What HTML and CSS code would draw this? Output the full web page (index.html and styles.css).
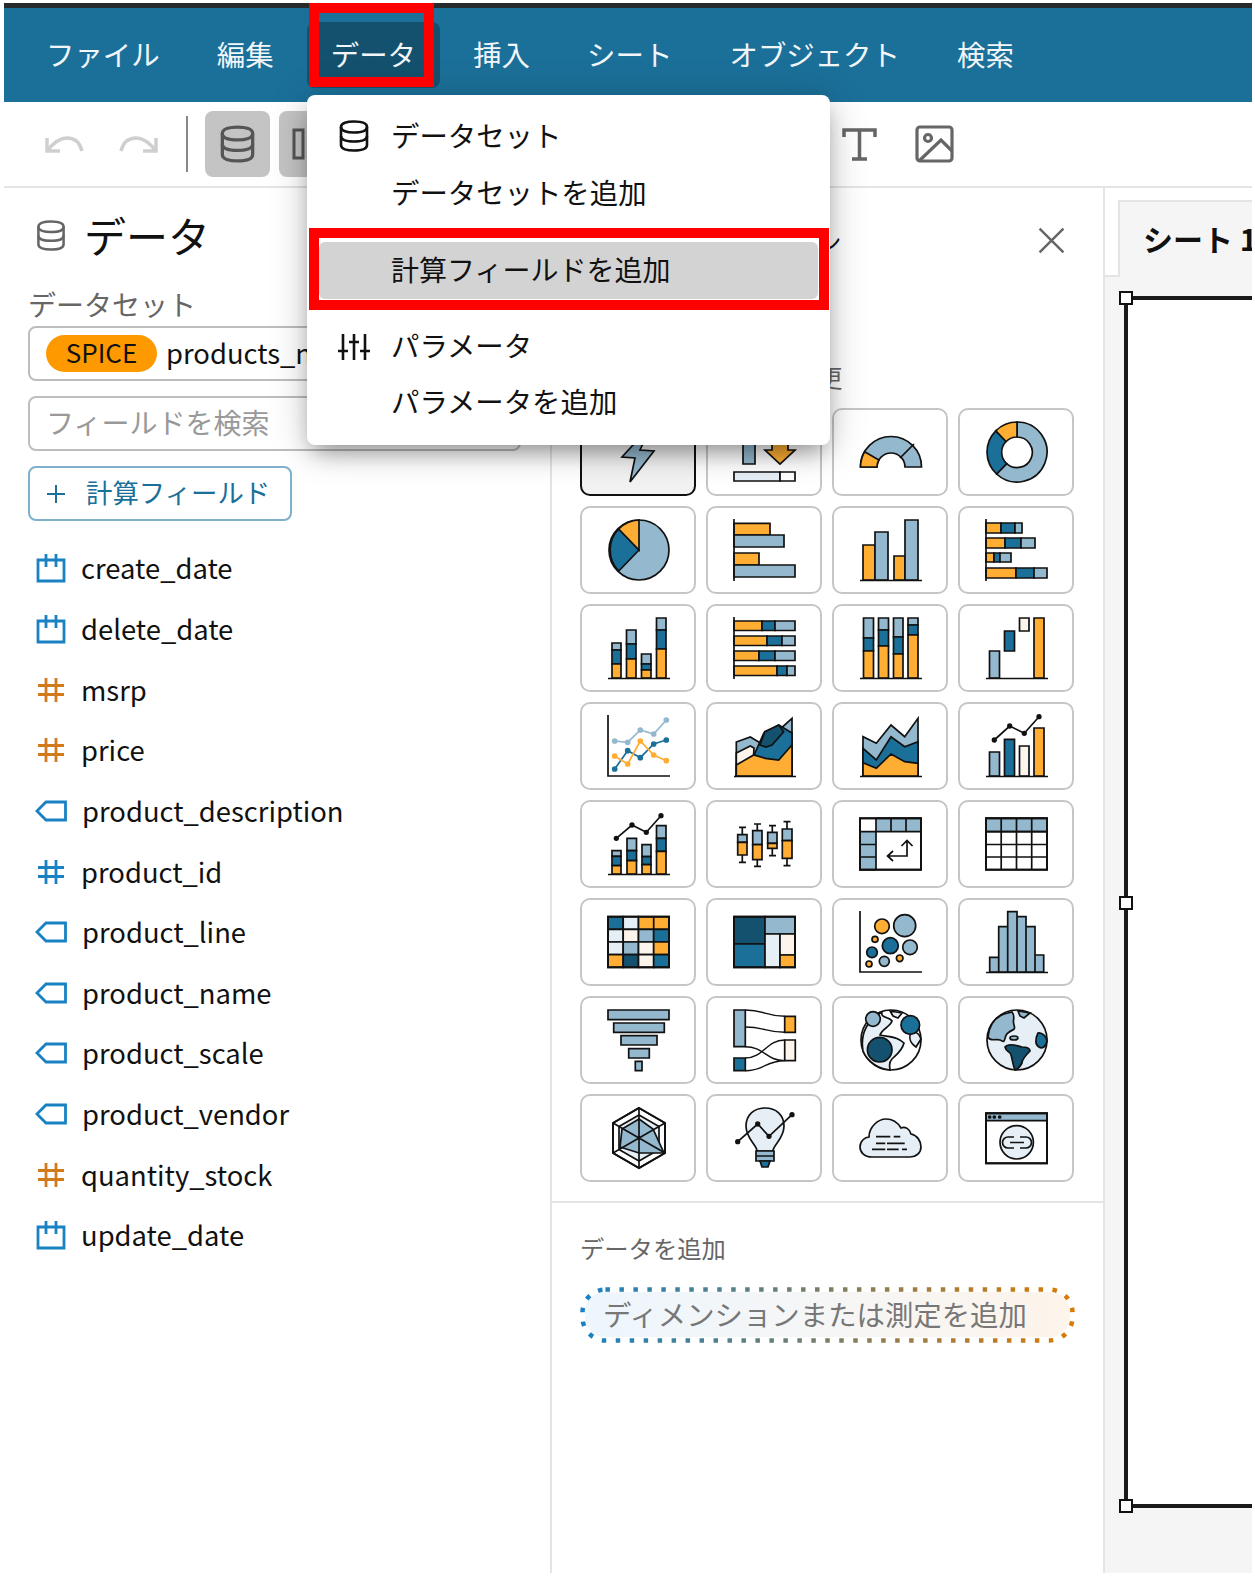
FILE: index.html
```html
<!DOCTYPE html>
<html lang="ja">
<head>
<meta charset="utf-8">
<title>データ</title>
<link rel="stylesheet" href="styles.css">
</head>
<body>
<svg class="defs" width="0" height="0">
  <symbol id="db" viewBox="0 0 30 32"><path d="M2 7C2 3 8 1.5 15 1.5S28 3 28 7V25C28 29 22 30.5 15 30.5S2 29 2 25Z"/><path d="M2 7C2 11 8 12.5 15 12.5S28 11 28 7M2 16C2 20 8 21.5 15 21.5S28 20 28 16"/></symbol>
  <symbol id="cal" viewBox="0 0 30 30"><path d="M2 7H28V28H2ZM10 1V14M20 1V14"/></symbol>
  <symbol id="hash" viewBox="0 0 30 30"><path d="M10 3V27M20 3V27M2 10.500H28M2 19.500H28"/></symbol>
  <symbol id="tag" viewBox="0 0 32 24"><path d="M30.500 3V21H11L2 12L11 3Z"/></symbol>
</svg>
<div class="app">
  <header class="topline"></header>
  <nav class="nav">
    <a class="nav-item">ファイル</a>
    <a class="nav-item">編集</a>
    <a class="nav-item nav-active">データ</a>
    <a class="nav-item">挿入</a>
    <a class="nav-item">シート</a>
    <a class="nav-item">オブジェクト</a>
    <a class="nav-item">検索</a>
  </nav>
  <div class="toolbar">
    <svg class="tb-hist" viewBox="0 0 40 18"><path d="M3 3V16H16M3 16C10 7 17 3 23 3C31 3 36 8 38 16"/></svg>
    <svg class="tb-hist tb-redo" viewBox="0 0 40 18"><path d="M37 3V16H24M37 16C30 7 23 3 17 3C9 3 4 8 2 16"/></svg>
    <span class="tb-sep"></span>
    <span class="tb-btn"><svg class="tb-db"><use href="#db"/></svg></span>
    <span class="tb-btn tb-btn2"><svg class="tb-rect" viewBox="0 0 40 32"><path d="M2 2H11V30H2ZM20 10H30V30H20Z"/></svg></span>
    <svg class="tb-t" viewBox="0 0 35 35"><path d="M2 10V3H33V10M17.500 3V32M10 32H25"/></svg>
    <svg class="tb-img" viewBox="0 0 39 38"><rect x="2" y="2" width="35" height="34" rx="3"/><circle cx="13" cy="13" r="3.500"/><path d="M4 36L26 15L37 26"/></svg>
  </div>
  <div class="workspace">
    <aside class="data-panel">
      <div class="panel-title"><svg class="title-db"><use href="#db"/></svg><h1>データ</h1></div>
      <div class="label">データセット</div>
      <div class="select"><span class="spice">SPICE</span><span class="select-name">products_new</span></div>
      <div class="search">フィールドを検索</div>
      <div class="calc-btn"><svg class="plus" viewBox="0 0 20 20"><path d="M10 1V19M1 10H19"/></svg>計算フィールド</div>
      <ul class="fields">
        <li><svg class="f-ic ic-blue"><use href="#cal"/></svg>create_date</li>
        <li><svg class="f-ic ic-blue"><use href="#cal"/></svg>delete_date</li>
        <li><svg class="f-ic ic-orange"><use href="#hash"/></svg>msrp</li>
        <li><svg class="f-ic ic-orange"><use href="#hash"/></svg>price</li>
        <li><svg class="f-ic f-tag ic-blue"><use href="#tag"/></svg>product_description</li>
        <li><svg class="f-ic ic-blue"><use href="#hash"/></svg>product_id</li>
        <li><svg class="f-ic f-tag ic-blue"><use href="#tag"/></svg>product_line</li>
        <li><svg class="f-ic f-tag ic-blue"><use href="#tag"/></svg>product_name</li>
        <li><svg class="f-ic f-tag ic-blue"><use href="#tag"/></svg>product_scale</li>
        <li><svg class="f-ic f-tag ic-blue"><use href="#tag"/></svg>product_vendor</li>
        <li><svg class="f-ic ic-orange"><use href="#hash"/></svg>quantity_stock</li>
        <li><svg class="f-ic ic-blue"><use href="#cal"/></svg>update_date</li>
      </ul>
    </aside>
    <section class="visual-panel">
      <div class="vp-head"><h2>ビジュアライゼーション</h2><svg class="close" viewBox="0 0 26 26"><path d="M1.500 1.500L24.500 24.500M24.500 1.500L1.500 24.500"/></svg></div>
      <p class="vp-sub">ビジュアルタイプを変更</p>
      <div class="grid">
        <div class="card card-on"><svg class="vi" viewBox="-1 -1 64 64"><path class="lb" d="M36 12L14 36L27 37L22 61L46 30L32 29L40 12Z"/></svg></div>
        <div class="card"><svg class="vi" viewBox="-1 -1 64 64"><path class="lb" d="M9 12H21V43H9Z"/><path class="or" d="M38 12H54V29H61L46 43L31 29H38Z"/><path class="pa" d="M0 51H46V60H0Z"/><path class="wh" d="M46 51H61V60H46Z"/></svg></div>
        <div class="card"><svg class="vi" viewBox="-1 -1 64 64"><path class="lb" d="M.5 46A30.500 30.500 0 0 1 61.500 46H45A14 14 0 0 0 17 46Z"/><path class="or" d="M.5 46A30.500 30.500 0 0 1 4.600 30.750L18.900 39A14 14 0 0 0 17 46Z"/><path d="M40 37L54 23"/></svg></div>
        <div class="card"><svg class="vi" viewBox="-1 -1 64 64"><path class="lb" d="M31 1A30 30 0 1 1 10.600 53L20.700 42.600A15.300 15.300 0 1 0 31 16Z"/><path class="bl" d="M10.600 53A30 30 0 0 1 9.800 9.800L20.100 20.500A15.300 15.300 0 0 0 20.700 42.600Z"/><path class="or" d="M9.800 9.800A30 30 0 0 1 31 1V16A15.300 15.300 0 0 0 20.100 20.500Z"/></svg></div>

        <div class="card"><svg class="vi" viewBox="-1 -1 64 64"><circle class="lb" cx="31" cy="31" r="30"/><path class="bl" d="M31 31L10.700 52A30 30 0 0 1 10.700 10Z"/><path class="or" d="M31 31L10.700 10A30 30 0 0 1 31 1Z"/></svg></div>
        <div class="card"><svg class="vi" viewBox="-1 -1 64 64"><path class="or" d="M0 4.300H36V16H0Z"/><path class="lb" d="M0 16H50V28H0Z"/><path class="or" d="M0 34H25V46H0Z"/><path class="lb" d="M0 46H61V58H0Z"/><path d="M0 0V62"/></svg></div>
        <div class="card"><svg class="vi" viewBox="-1 -1 64 64"><path class="or" d="M3 26H15V61H3Z"/><path class="lb" d="M15 13H28V61H15Z"/><path class="or" d="M34 37H45V61H34Z"/><path class="lb" d="M45 1H58V61H45Z"/><path d="M0 61.500H62"/></svg></div>
        <div class="card"><svg class="vi" viewBox="-1 -1 64 64"><path class="or" d="M0 4H15V14H0Z"/><path class="bl" d="M15 4H29V14H15Z"/><path class="lb" d="M29 4H36V14H29Z"/><path class="or" d="M0 19H19V29H0Z"/><path class="bl" d="M19 19H35V29H19Z"/><path class="lb" d="M35 19H49V29H35Z"/><path class="or" d="M0 34H8V43H0Z"/><path class="bl" d="M8 34H14V43H8Z"/><path class="lb" d="M14 34H25V43H14Z"/><path class="or" d="M0 49H30V59H0Z"/><path class="bl" d="M30 49H48V59H30Z"/><path class="lb" d="M48 49H61V59H48Z"/><path d="M0 0V62"/></svg></div>

        <div class="card"><svg class="vi" viewBox="-1 -1 64 64"><path class="lb" d="M4 26H13V33H4Z"/><path class="bl" d="M4 33H13V47H4Z"/><path class="or" d="M4 47H13V61H4Z"/><path class="lb" d="M18.500 13H28V27H18.500Z"/><path class="bl" d="M18.500 27H28V42H18.500Z"/><path class="or" d="M18.500 42H28V61H18.500Z"/><path class="lb" d="M33.500 37H43V47H33.500Z"/><path class="bl" d="M33.500 47H43V53H33.500Z"/><path class="or" d="M33.500 53H43V61H33.500Z"/><path class="lb" d="M48.500 1H58V13H48.500Z"/><path class="bl" d="M48.500 13H58V32H48.500Z"/><path class="or" d="M48.500 32H58V61H48.500Z"/><path d="M0 61.500H62"/></svg></div>
        <div class="card"><svg class="vi" viewBox="-1 -1 64 64"><path class="or" d="M0 4H28V13.500H0Z"/><path class="bl" d="M28 4H41V13.500H28Z"/><path class="lb" d="M41 4H61V13.500H41Z"/><path class="or" d="M0 19H33V28.500H0Z"/><path class="bl" d="M33 19H48V28.500H33Z"/><path class="lb" d="M48 19H61V28.500H48Z"/><path class="or" d="M0 34H25V43.500H0Z"/><path class="bl" d="M25 34H41V43.500H25Z"/><path class="lb" d="M41 34H61V43.500H41Z"/><path class="or" d="M0 49H43V58.500H0Z"/><path class="bl" d="M43 49H53V58.500H43Z"/><path class="lb" d="M53 49H61V58.500H53Z"/><path d="M0 0V62"/></svg></div>
        <div class="card"><svg class="vi" viewBox="-1 -1 64 64"><path class="lb" d="M3.500 1H13.500V21H3.500Z"/><path class="bl" d="M3.500 21H13.500V34H3.500Z"/><path class="or" d="M3.500 34H13.500V61H3.500Z"/><path class="lb" d="M18.500 1H28.500V13H18.500Z"/><path class="bl" d="M18.500 13H28.500V29H18.500Z"/><path class="or" d="M18.500 29H28.500V61H18.500Z"/><path class="lb" d="M33.500 1H43V20H33.500Z"/><path class="bl" d="M33.500 20H43V37H33.500Z"/><path class="or" d="M33.500 37H43V61H33.500Z"/><path class="lb" d="M48 1H58V8H48Z"/><path class="bl" d="M48 8H58V18H48Z"/><path class="or" d="M48 18H58V61H48Z"/><path d="M0 61.500H62"/></svg></div>
        <div class="card"><svg class="vi" viewBox="-1 -1 64 64"><path class="lb" d="M3.500 34H13.500V61H3.500Z"/><path class="bl" d="M18.500 14H28.500V34H18.500Z"/><path class="cr" d="M33.500 1H43V14H33.500Z"/><path class="or" d="M48 1H58V61H48Z"/><path d="M0 61.500H62"/></svg></div>

        <div class="card"><svg class="vi" viewBox="-1 -1 64 64"><path d="M0 0V61H62"/><g class="ln ln-lb"><path d="M6.700 26L19.700 27.300L32.300 15L45.700 19L58.300 5"/><circle cx="6.700" cy="26" r="2"/><circle cx="19.700" cy="27.300" r="2"/><circle cx="32.300" cy="15" r="2"/><circle cx="45.700" cy="19" r="2"/><circle cx="58.300" cy="5" r="2"/></g><g class="ln ln-bl"><path d="M6.700 54L19.700 35.700L32.300 42.700L45.700 29L58.300 25"/><circle cx="6.700" cy="54" r="2"/><circle cx="19.700" cy="35.700" r="2"/><circle cx="32.300" cy="42.700" r="2"/><circle cx="45.700" cy="29" r="2"/><circle cx="58.300" cy="25" r="2"/></g><g class="ln ln-or"><path d="M6.700 41L19.700 49L32.300 26L45.700 40L58.300 45.700"/><circle cx="6.700" cy="41" r="2"/><circle cx="19.700" cy="49" r="2"/><circle cx="32.300" cy="26" r="2"/><circle cx="45.700" cy="40" r="2"/><circle cx="58.300" cy="45.700" r="2"/></g></svg></div>
        <div class="card"><svg class="vi" viewBox="-1 -1 64 64"><path class="lb" d="M2.300 61V27L16.300 22L28 29L44 16L58 3.300V61Z"/><path class="cr" d="M2.300 61V38L16.300 31L20 33L19 50Z"/><path class="bl" d="M17 61L21 38L29.700 18.300L44.700 10L58 18V61Z"/><path class="dk" d="M26 30L30.700 16.700L44.700 10L49.700 16.700L38 30L32 32Z"/><path class="or" d="M2.300 61V50L19.700 40L31.300 43.300L44.700 45L58 30V61Z"/><path d="M0 61.500H62"/></svg></div>
        <div class="card"><svg class="vi" viewBox="-1 -1 64 64"><path class="lb" d="M3 61V21.700L16.300 28.300L31 10L44.700 21.700L58 3.300V61Z"/><path class="bl" d="M3 61V33.300L16.300 45L31 21.700L44.700 31.700L58 26.700V61Z"/><path class="or" d="M3 61V47.700L16.300 53.300L31 39L44.700 46.700L58 48.300V61Z"/><path d="M0 61.500H62"/></svg></div>
        <div class="card"><svg class="vi" viewBox="-1 -1 64 64"><path class="lb" d="M3.500 37H13.500V61H3.500Z"/><path class="bl" d="M18.500 24.300H28.500V61H18.500Z"/><path class="cr" d="M33.500 31H43V61H33.500Z"/><path class="or" d="M48 13H58V61H48Z"/><path d="M0 61.500H62M8.300 25L23.700 11L38.300 18.300L53 1.700"/><circle class="k" cx="8.300" cy="25" r="1.800"/><circle class="k" cx="23.700" cy="11" r="1.800"/><circle class="k" cx="38.300" cy="18.300" r="1.800"/><circle class="k" cx="53" cy="1.700" r="1.800"/></svg></div>

        <div class="card"><svg class="vi" viewBox="-1 -1 64 64"><path class="lb" d="M4 37.700H13V43.300H4Z"/><path class="bl" d="M4 43.300H13V52.700H4Z"/><path class="or" d="M4 52.700H13V61H4Z"/><path class="lb" d="M19 25.300H28.500V37.700H19Z"/><path class="bl" d="M19 37.700H28.500V47.700H19Z"/><path class="or" d="M19 47.700H28.500V61H19Z"/><path class="lb" d="M34 31.700H43V43.700H34Z"/><path class="bl" d="M34 43.700H43V51.700H34Z"/><path class="or" d="M34 51.700H43V61H34Z"/><path class="lb" d="M48.500 12.700H58V25.300H48.500Z"/><path class="bl" d="M48.500 25.300H58V38.300H48.500Z"/><path class="or" d="M48.500 38.300H58V61H48.500Z"/><path d="M0 61.500H62M8.300 25.300L24 12L38.300 19.300L53 2.700"/><circle class="k" cx="8.300" cy="25.300" r="1.800"/><circle class="k" cx="24" cy="12" r="1.800"/><circle class="k" cx="38.300" cy="19.300" r="1.800"/><circle class="k" cx="53" cy="2.700" r="1.800"/></svg></div>
        <div class="card"><svg class="vi" viewBox="-1 -1 64 64"><path d="M8.300 14.300V49.300M5 14.300H12M5 49.300H12M23.300 11V53.300M20 11H27M20 53.300H27M38.300 12.700V42.700M35 12.700H42M35 42.700H42M53 8.700V52.700M49.500 8.700H56.500M49.500 52.700H56.500"/><path class="lb" d="M3.700 21.700H13V29.300H3.700Z"/><path class="or" d="M3.700 29.300H13V42H3.700Z"/><path class="lb" d="M18.700 17.700H28V31.700H18.700Z"/><path class="or" d="M18.700 31.700H28V46.700H18.700Z"/><path class="lb" d="M33.700 19.300H43V30.300H33.700Z"/><path class="or" d="M33.700 30.300H43V35.300H33.700Z"/><path class="lb" d="M48.300 16H58V27.700H48.300Z"/><path class="or" d="M48.300 27.700H58V45.300H48.300Z"/></svg></div>
        <div class="card"><svg class="vi" viewBox="-1 -1 64 64"><path class="wh" d="M0 5.300H61V56.700H0Z"/><path class="lb" d="M16 5.300H31V18.700H16ZM31 5.300H46V18.700H31ZM46 5.300H61V18.700H46ZM0 18.700H16V31.500H0ZM0 31.500H16V44H0ZM0 44H16V56.700H0Z"/><path class="thick" d="M0 5.300H61V56.700H0Z"/><path d="M28 43H47V28M33 38L27.500 43L33 48M41.500 33L47 27.500L52.500 33"/></svg></div>
        <div class="card"><svg class="vi" viewBox="-1 -1 64 64"><path class="wh" d="M0 5.300H61V56.700H0Z"/><path class="lb" d="M0 5.300H61V18.700H0Z"/><path d="M15.200 5.300V56.700M30.500 5.300V56.700M45.700 5.300V56.700M0 18.700H61M0 31.500H61M0 44H61"/><path class="thick" d="M0 5.300H61V56.700H0Z"/></svg></div>

        <div class="card"><svg class="vi" viewBox="-1 -1 64 64"><path class="bl" d="M0 5.700H15.200V18.300H0Z"/><path class="pa" d="M15.200 5.700H30.500V18.300H15.200Z"/><path class="or" d="M30.500 5.700H45.700V18.300H30.500ZM45.700 5.700H61V18.300H45.700Z"/><path class="pa" d="M0 18.300H15.200V31H0Z"/><path class="cr" d="M15.200 18.300H30.500V31H15.200Z"/><path class="lb" d="M30.500 18.300H45.700V31H30.500Z"/><path class="bl" d="M45.700 18.300H61V31H45.700Z"/><path class="pa" d="M0 31H15.200V43.700H0Z"/><path class="lb" d="M15.200 31H30.500V43.700H15.200Z"/><path class="cr" d="M30.500 31H45.700V43.700H30.500Z"/><path class="or" d="M45.700 31H61V43.700H45.700Z"/><path class="or" d="M0 43.700H15.200V56.300H0Z"/><path class="dk" d="M15.200 43.700H30.500V56.300H15.200Z"/><path class="cr" d="M30.500 43.700H45.700V56.300H30.500Z"/><path class="bl" d="M45.700 43.700H61V56.300H45.700Z"/><path class="thick" d="M0 5.700H61V56.300H0Z"/></svg></div>
        <div class="card"><svg class="vi" viewBox="-1 -1 64 64"><path class="dk" d="M0 5.700H31V33H0Z"/><path class="bl" d="M0 33H31V56.300H0Z"/><path class="lb" d="M31 5.700H61V23H31Z"/><path class="pa" d="M31 23H46V56.300H31Z"/><path class="cr" d="M46 23H61V44H46Z"/><path class="or" d="M46 44H61V56.300H46Z"/><path class="thick" d="M0 5.700H61V56.300H0Z"/></svg></div>
        <div class="card"><svg class="vi" viewBox="-1 -1 64 64"><path d="M0 0V61H62"/><circle class="or" cx="22" cy="15.300" r="7.300"/><circle class="lb" cx="44.700" cy="14.700" r="11"/><circle class="or" cx="15" cy="28.300" r="3"/><circle class="bl" cx="30.300" cy="34.700" r="8"/><circle class="lb" cx="50" cy="36.300" r="7.300"/><circle class="bl" cx="12" cy="41.300" r="5.300"/><circle class="lb" cx="24.300" cy="50.300" r="5"/><circle class="or" cx="39.700" cy="47.300" r="3.300"/><circle class="or" cx="9" cy="53" r="3"/></svg></div>
        <div class="card"><svg class="vi" viewBox="-1 -1 64 64"><path class="lb" d="M3.700 46.300H12.700V61H3.700ZM12.700 15.700H21.700V61H12.700ZM21.700 .7H31V61H21.700ZM31 5.700H40V61H31ZM40 15.700H49V61H40ZM49 44H57.700V61H49Z"/><path d="M0 61.500H62"/></svg></div>

        <div class="card"><svg class="vi" viewBox="-1 -1 64 64"><path class="lb" d="M0 1H61V10.700H0ZM5.700 14H56.300V23.300H5.700ZM13 26.700H49V36H13ZM20.700 39.700H41.300V49H20.700ZM27.300 52.300H34V61.700H27.300Z"/></svg></div>
        <div class="card"><svg class="vi" viewBox="-1 -1 64 64"><path class="lb" d="M0 1H11.300V37.700H0Z"/><path class="bl" d="M0 49H11.300V61.700H0Z"/><path class="or" d="M50.700 7.300H61.300V23.300H50.700Z"/><path class="cr" d="M50.700 31H61.300V51.700H50.700Z"/><path class="fl" d="M11.300 1C30 1 32 7.300 50.700 7.300M11.300 18C30 18 32 23.300 50.700 23.300M11.300 37.700C30 37.700 32 51.700 50.700 51.700M11.300 49C30 49 32 31 50.700 31M11.300 61.700C30 61.700 32 51.700 50.700 51.700"/></svg></div>
        <div class="card"><svg class="vi" viewBox="-1 -1 64 64"><circle class="wh" cx="31" cy="31" r="30"/><path class="pa" d="M22 3C20 9 30 8 32 12C30 18 22 20 20 26C26 28 36 26 44 34C42 42 36 46 32 50C28 54 30 58 30 61C20 60 8 54 3 42C1 30 3 14 22 3Z"/><path class="pa" d="M30 2L42 4L38 9L33 7ZM52 22C48 28 50 34 56 38L61 30C60 26 57 23 52 22Z"/><circle class="lb" cx="13" cy="10" r="7.300"/><circle class="bl" cx="50.300" cy="16" r="9.300"/><circle class="dk" cx="19.700" cy="40.700" r="12.300"/></svg></div>
        <div class="card"><svg class="vi" viewBox="-1 -1 64 64"><circle class="pa" cx="31" cy="31" r="30"/><path class="lb" d="M18 5C8 9 3 16 2 28C5 34 12 28 16 32C20 34 18 26 22 24C26 20 30 22 28 16C26 10 30 8 26 3Z"/><path class="lb" d="M32 2L44 4L38 9L34 7Z"/><ellipse class="lb" cx="28" cy="29" rx="4" ry="2"/><path class="dk" d="M19 38C22 34 30 36 36 38C42 38 44 40 44 42C40 46 36 50 36 54C34 58 32 60 29 61C26 54 26 46 24 44C22 42 20 42 19 38Z"/><path class="bl" d="M52 24C56 23 61 28 61 32C60 38 56 40 53 38C49 36 49 30 52 24Z"/></svg></div>

        <div class="card"><svg class="vi" viewBox="-1 -1 64 64"><path class="wh" d="M31 1L57 16V46L31 61L5 46V16Z"/><path class="pa" d="M31 8L51 19.500V42.500L31 54L11 42.500V19.500Z"/><path class="lb" d="M31 12L45 22L56 46L31 46L12 40L14 22Z"/><path d="M31 1V61M5 16L57 46M57 16L5 46"/><path class="thick" d="M31 1L57 16V46L31 61L5 46V16Z"/></svg></div>
        <div class="card"><svg class="vi" viewBox="-1 -1 64 64"><path class="pa" d="M23 44C23 38 12 32 12 19C12 8 20 1 31 1C42 1 50 8 50 19C50 32 39 38 39 44Z"/><path class="lb" d="M22 44H40V49H22ZM22 49H40V54H22Z"/><path class="bl" d="M26 54H36L34 60H28Z"/><path d="M3.700 34.700L23.700 17L35 29.300L58 7.700"/><circle class="k" cx="3.700" cy="34.700" r="1.800"/><circle class="k" cx="23.700" cy="17" r="1.800"/><circle class="k" cx="35" cy="29.300" r="1.800"/><circle class="k" cx="58" cy="7.700" r="1.800"/></svg></div>
        <div class="card"><svg class="vi" viewBox="-1 -1 64 64"><path class="pa" d="M12 50C4 50 0 45 0 40C0 34 5 30 9 30C9 20 18 12 26 12C33 12 38 16 41 21C45 19 50 22 51 27C57 28 61 34 61 40C61 46 56 50 50 50Z"/><path d="M16 29.700H30.300M33.700 29.700H40.300M16 36.300H25.300M27 36.300H44.700M12 42.300H25.300M27 42.300H38.700M42 42.300H47"/></svg></div>
        <div class="card"><svg class="vi" viewBox="-1 -1 64 64"><path class="wh" d="M0 6.300H61V56.300H0Z"/><path class="lb" d="M0 6.300H61V13.700H0Z"/><circle class="k" cx="3.700" cy="10" r="1"/><circle class="k" cx="8.300" cy="10" r="1"/><circle class="k" cx="13.700" cy="10" r="1"/><circle class="pa" cx="30.700" cy="35.300" r="16.700"/><path d="M28 30H22A5.500 5.500 0 0 0 22 41H28M34 30H40A5.500 5.500 0 0 1 40 41H34M24 35.500H38"/><path class="thick" d="M0 6.300H61V56.300H0Z"/></svg></div>
      </div>
      <div class="add-data">
        <div class="add-label">データを追加</div>
        <div class="pill">ディメンションまたは測定を追加
          <svg class="pill-dots" viewBox="0 0 496 56"><defs><linearGradient id="dots"><stop offset="0" stop-color="#1a82c2"/><stop offset="1" stop-color="#da7a05"/></linearGradient></defs><rect x="2.500" y="2.500" width="491" height="51" rx="23"/></svg>
        </div>
      </div>
    </section>
    <section class="canvas">
      <div class="tabs"><div class="tab">シート 1</div></div>
      <div class="sheet">
        <div class="visual">
          <span class="handle h-top"></span><span class="handle h-mid"></span><span class="handle h-bot"></span>
        </div>
      </div>
    </section>
  </div>
</div>

<div class="menu">
  <div class="m-item"><svg class="m-db"><use href="#db"/></svg>データセット</div>
  <div class="m-item">データセットを追加</div>
  <div class="m-item m-hover">計算フィールドを追加</div>
  <div class="m-item"><svg class="m-sl" viewBox="0 0 32 28"><path d="M5 1V27M16 1V27M27 1V27M0 18H10M11 9H21M22 18H32"/></svg>パラメータ</div>
  <div class="m-item">パラメータを追加</div>
</div>
<div class="mark mark-nav"></div>
<div class="mark mark-item"></div>
</body>
</html>
```
FILE: styles.css
```css
* { box-sizing: border-box; }
html, body { margin: 0; padding: 0; }
body {
  position: relative;
  width: 1255px;
  height: 1576px;
  overflow: hidden;
  background: #fff;
  color: #111;
  font-family: "Noto Sans CJK JP", "Noto Sans", sans-serif;
  font-size: 28px;
}
.defs { position: absolute; }
.app {
  width: 1248px;
  height: 1570px;
  margin: 3px 0 0 4px;
  display: flex;
  flex-direction: column;
  overflow: hidden;
}
.topline { height: 5px; background: #262a2c; flex: none; }

/* nav */
.nav {
  height: 94px;
  flex: none;
  background: #1b7099;
  display: flex;
  align-items: center;
  gap: 9.2px;
  padding: 0 0 0 18px;
  font-size: 28.4px;
}
.nav-item {
  height: 66px;
  line-height: 64px;
  padding: 0 24px;
  color: #f2f6f9;
  border-radius: 8px;
  white-space: nowrap;
}
.nav-active { background: #14516e; }

/* toolbar */
.toolbar {
  height: 86px;
  flex: none;
  border-bottom: 2px solid #e4e4e4;
  display: flex;
  align-items: center;
  padding-left: 40px;
}
.toolbar svg { fill: none; }
.tb-hist { width: 40px; height: 18px; stroke: #cfcfcf; stroke-width: 3.5; }
.tb-redo { margin-left: 35px; }
.tb-sep { width: 2px; height: 56px; background: #888; margin: 0 17px 0 27px; }
.tb-btn {
  width: 65px;
  height: 66px;
  background: #c4c4c4;
  border-radius: 8px;
  display: flex;
  align-items: center;
  justify-content: center;
}
.tb-btn2 { margin-left: 9px; }
.tb-db { width: 35px; height: 38px; stroke: #555; stroke-width: 2.8; }
.tb-rect { width: 40px; height: 32px; stroke: #555; stroke-width: 3; }
.tb-t { width: 35px; height: 35px; stroke: #666; stroke-width: 3.5; margin-left: 498px; }
.tb-img { width: 39px; height: 38px; stroke: #666; stroke-width: 3.2; margin-left: 38px; }

/* layout */
.workspace { flex: 1; min-height: 0; display: flex; }
.data-panel {
  width: 548px;
  flex: none;
  border-right: 2px solid #e4e4e4;
  padding: 17px 0 0 24px;
}
.panel-title { display: flex; align-items: center; height: 60px; padding-left: 8px; }
.title-db { width: 30px; height: 31px; fill: none; stroke: #666; stroke-width: 2.6; margin-right: 18px; }
h1 { margin: 0; font-size: 42px; font-weight: 400; line-height: 60px; }
.label { color: #666; line-height: 36px; margin-top: 21px; }
.select, .search {
  width: 493px;
  height: 55px;
  border: 2px solid #bdbdbd;
  border-radius: 8px;
  display: flex;
  align-items: center;
}
.select { margin-top: 4px; padding-left: 16px; }
.spice {
  width: 111px;
  height: 37px;
  line-height: 34px;
  font-size: 26px;
  text-align: center;
  border-radius: 19px;
  background: #ff9900;
}
.select-name { margin-left: 9px; font-size: 27.4px; padding-bottom: 4px; }
.search { margin-top: 15px; padding: 0 0 3px 16px; color: #999; }
.calc-btn {
  width: 264px;
  height: 55px;
  margin-top: 15px;
  border: 2px solid #7fb0cc;
  border-radius: 8px;
  color: #1b7099;
  font-size: 26.4px;
  display: flex;
  align-items: center;
  padding: 0 0 4px 16px;
}
.plus { width: 20px; height: 20px; fill: none; stroke: #1b7099; stroke-width: 2; margin: 4px 20px 0 0; }
.fields { list-style: none; margin: 16px 0 0; padding: 0; font-size: 27.4px; }
.fields li { height: 60.65px; display: flex; align-items: center; }
.f-ic { width: 30px; height: 30px; margin: 2px 15px 0 8px; fill: none; stroke-width: 2.8; flex: none; }
.f-tag { width: 32px; height: 24px; margin: 2px 15px 0 7px; }
.ic-blue { stroke: #1a82c2; }
.ic-orange { stroke: #d17a1a; }

/* visual panel */
.visual-panel {
  width: 553px;
  flex: none;
  border-right: 2px solid #e4e4e4;
  display: flex;
  flex-direction: column;
}
.vp-head {
  height: 32px;
  margin: 36px 0 0 28px;
  padding-right: 38px;
  display: flex;
  align-items: center;
  justify-content: space-between;
}
h2 { margin: 0; font-size: 24px; font-weight: 400; }
.close { width: 27px; height: 27px; fill: none; stroke: #666; stroke-width: 2.4; }
.vp-sub { margin: 107px 0 0 29px; height: 28px; font-size: 24px; line-height: 28px; color: #666; }
.grid {
  margin: 16.5px 0 0 28px;
  display: grid;
  grid-template-columns: repeat(4, 116px);
  grid-auto-rows: 88px;
  gap: 10px;
}
.card {
  background: #fff;
  border: 2.4px solid #c6c6c6;
  border-radius: 10px;
  display: flex;
  align-items: center;
  justify-content: center;
}
.card-on { border-color: #111; background: #f2f2f2; }
.vi { width: 64px; height: 64px; margin-left: 1px; fill: none; stroke: #111; stroke-width: 1.7; overflow: visible; }
.lb { fill: #94b8ce; }
.bl { fill: #1b7099; }
.dk { fill: #14516e; }
.or { fill: #ffae33; }
.cr { fill: #fdf5ec; }
.pa { fill: #e6eff5; }
.wh { fill: #fff; }
.k { fill: #111; }
.thick { stroke-width: 2; }
.fl { stroke-width: 1.4; }
.ln path { stroke-width: 1.7; }
.ln-lb { stroke: #94b8ce; fill: #94b8ce; }
.ln-lb path, .ln-bl path, .ln-or path { fill: none; }
.ln-bl { stroke: #1b7099; fill: #1b7099; }
.ln-or { stroke: #ffae33; fill: #ffae33; }

.add-data {
  margin-top: 19.5px;
  border-top: 2px solid #e4e4e4;
  padding: 28px 0 0 28px;
  flex: 1;
}
.add-label { font-size: 24.3px; line-height: 34px; color: #666; }
.pill {
  position: relative;
  width: 485px;
  height: 45px;
  margin: 27px 0 0 5px;
  padding-left: 18px;
  line-height: 43px;
  font-size: 28.4px;
  color: #777;
  border-radius: 20px;
  background: linear-gradient(90deg, #edf6fd, #f6f6f6 50%, #fdf4ea);
  white-space: nowrap;
}
.pill-dots {
  position: absolute;
  left: -5px;
  top: -5px;
  width: 495px;
  height: 56px;
  fill: none;
  stroke: url(#dots);
  stroke-width: 4.5;
  stroke-dasharray: 4.5 9.5;
}

/* canvas */
.canvas {
  flex: 1;
  min-width: 0;
  display: flex;
  flex-direction: column;
  overflow: hidden;
}
.tabs {
  height: 89px;
  flex: none;
  padding: 12px 0 0 13px;
  border-bottom: 2px solid #e4e4e4;
  display: flex;
}
.tab {
  width: 200px;
  height: 77px;
  padding: 6px 0 0 23px;
  background: #f5f5f5;
  border: 2px solid #e4e4e4;
  border-bottom: 0;
  font-size: 30px;
  font-weight: 700;
  line-height: 60px;
  white-space: nowrap;
}
.sheet { flex: 1; background: #f5f5f5; padding: 19px 0 0 19px; }
.visual {
  position: relative;
  width: 400px;
  height: 1212px;
  background: #fff;
  border: solid #1a1a1a;
  border-width: 4px 0 4px 4px;
}
.handle {
  position: absolute;
  left: -9px;
  width: 14px;
  height: 14px;
  background: #fff;
  border: 2.5px solid #111;
}
.h-top { top: -9px; }
.h-mid { top: 596px; }
.h-bot { bottom: -9px; }

/* menu overlay */
.menu {
  position: absolute;
  left: 307px;
  top: 95px;
  width: 523px;
  height: 350px;
  padding-top: 14px;
  background: #fff;
  border-radius: 8px;
  font-size: 28.4px;
  box-shadow: 0 4px 40px rgba(0, 0, 0, .2), 0 12px 22px -6px rgba(0, 0, 0, .35);
}
.m-item {
  position: relative;
  height: 56.5px;
  line-height: 52px;
  padding-left: 84px;
  white-space: nowrap;
}
.m-hover {
  margin: 20px 12px;
  padding-left: 72px;
  font-size: 28px;
  line-height: 54px;
  background: #d3d3d3;
  border-radius: 6px;
}
.m-db { position: absolute; left: 32px; top: 11px; width: 30px; height: 32px; fill: none; stroke: #111; stroke-width: 2.6; }
.m-sl { position: absolute; left: 31px; top: 14px; width: 32px; height: 28px; fill: none; stroke: #111; stroke-width: 2.6; }
.mark { position: absolute; border: 10px solid #f00; }
.mark-nav { left: 309px; top: 3px; width: 125px; height: 84px; }
.mark-item { left: 309px; top: 228px; width: 520px; height: 82px; }
```
